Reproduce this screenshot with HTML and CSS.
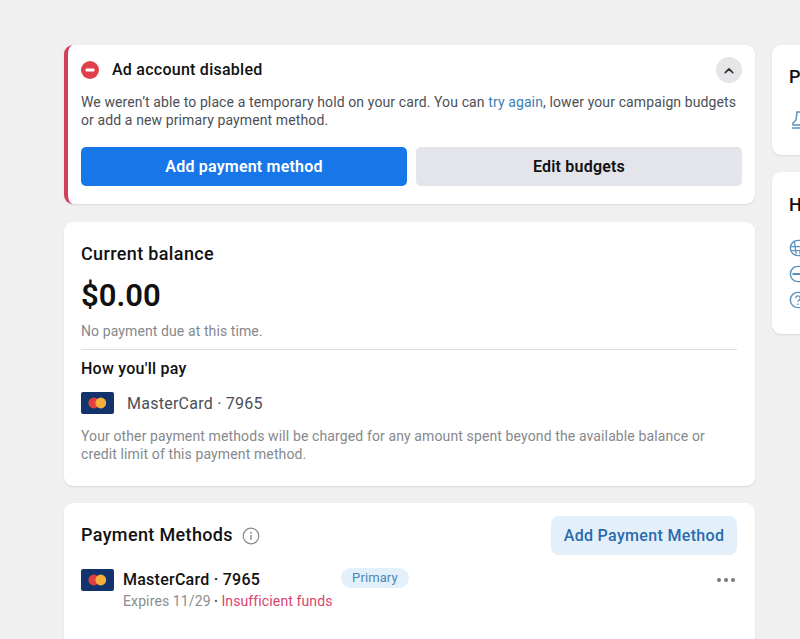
FILE: index.html
```html
<!DOCTYPE html>
<html lang="en">
<head>
<meta charset="utf-8">
<title>Billing</title>
<link rel="stylesheet" href="styles.css">
</head>
<body>
<div class="page">
  <main class="main">
    <section class="card alert">
      <div class="alert-head">
        <svg class="stop" viewBox="0 0 18 18" width="18" height="18"><circle cx="9" cy="9" r="9" fill="#e0404c"/><rect x="4.5" y="7.6" width="9" height="2.8" rx="1.2" fill="#fff"/></svg>
        <h2 class="alert-title">Ad account disabled</h2>
        <button class="collapse" aria-label="Collapse"><svg viewBox="0 0 12 8" width="10" height="7"><path d="M1.5 6.5 6 2l4.5 4.5" fill="none" stroke="#333" stroke-width="2" stroke-linecap="round" stroke-linejoin="round"/></svg></button>
      </div>
      <p class="alert-text">We weren’t able to place a temporary hold on your card. You can <a class="link">try again</a>, lower your campaign budgets or add a new primary payment method.</p>
      <div class="alert-actions">
        <button class="btn btn-primary">Add payment method</button>
        <button class="btn btn-grey">Edit budgets</button>
      </div>
    </section>

    <section class="card balance">
      <h2 class="balance-title">Current balance</h2>
      <div class="amount">$0.00</div>
      <p class="due">No payment due at this time.</p>
      <hr class="rule">
      <h3 class="pay-title">How you'll pay</h3>
      <div class="pay-row">
        <svg class="mc" viewBox="0 0 33 22" width="33" height="22"><rect width="33" height="22" rx="2" fill="#12336b"/><circle cx="12.8" cy="11" r="5.4" fill="#e2403f"/><circle cx="19.8" cy="11" r="5.4" fill="#f3b03c"/></svg>
        <span class="pay-name">MasterCard · 7965</span>
      </div>
      <p class="note">Your other payment methods will be charged for any amount spent beyond the available balance or credit limit of this payment method.</p>
    </section>

    <section class="card methods">
      <div class="methods-head">
        <h2 class="methods-title">Payment Methods</h2>
        <svg class="info" viewBox="0 0 18 18" width="18" height="18"><circle cx="9" cy="9" r="7.8" fill="none" stroke="#8a8a8a" stroke-width="1.2"/><rect x="8.3" y="8" width="1.4" height="5" fill="#8a8a8a"/><circle cx="9" cy="5.7" r="0.9" fill="#8a8a8a"/></svg>
        <button class="btn-add">Add Payment Method</button>
      </div>
      <div class="method-row">
        <svg class="mc" viewBox="0 0 33 22" width="33" height="22"><rect width="33" height="22" rx="2" fill="#12336b"/><circle cx="12.8" cy="11" r="5.4" fill="#e2403f"/><circle cx="19.8" cy="11" r="5.4" fill="#f3b03c"/></svg>
        <div class="method-info">
          <div class="method-line">
            <span class="method-name">MasterCard · 7965</span>
            <span class="badge">Primary</span>
          </div>
          <div class="method-sub">Expires 11/29 <span class="sep">•</span> <span class="danger">Insufficient funds</span></div>
        </div>
        <span class="dots"><i></i><i></i><i></i></span>
      </div>
    </section>
  </main>

  <aside class="side">
    <section class="card side-one">
      <h2 class="side-title">Payment activity</h2>
      <svg class="side-icon" viewBox="0 0 20 20" width="20" height="20"><path d="M8 2h4l1 8 3 3v2H4v-2l3-3z M3 18h14" fill="none" stroke="#5a93bd" stroke-width="1.5"/></svg>
    </section>
    <section class="card side-two">
      <h2 class="side-title">Help</h2>
      <div class="side-icons">
        <svg viewBox="0 0 20 20" width="18" height="18"><circle cx="10" cy="10" r="8.5" fill="none" stroke="#5a93bd" stroke-width="1.6"/><path d="M2 8.5h16M2.5 13h15M6 3l2 14M14 3l-2 14" fill="none" stroke="#5a93bd" stroke-width="1.4"/></svg>
        <svg viewBox="0 0 20 20" width="18" height="18"><circle cx="10" cy="10" r="8.5" fill="none" stroke="#5a93bd" stroke-width="1.6"/><path d="M4 10h12" stroke="#4a80aa" stroke-width="2"/></svg>
        <svg viewBox="0 0 20 20" width="18" height="18"><circle cx="10" cy="10" r="8.5" fill="none" stroke="#5a93bd" stroke-width="1.6"/><path d="M7.5 8a2.5 2.5 0 1 1 3.6 2.2c-.8.4-1.1 1-1.1 1.8M10 14v1.5" fill="none" stroke="#5a93bd" stroke-width="1.5"/></svg>
      </div>
    </section>
  </aside>
</div>
</body>
</html>
```
FILE: styles.css
```css
* { box-sizing: border-box; }
html, body { margin: 0; height: 639px; overflow: hidden; }
body { background: #f0f0f0; font-family: Roboto, "Liberation Sans", sans-serif; color: #111; }
h2, h3, p { margin: 0; }
button { font-family: inherit; border: 0; cursor: pointer; }

.page { display: flex; gap: 17px; align-items: flex-start; padding: 45px 0 0 64px; width: 1100px; }
.main { width: 691px; flex: none; display: flex; flex-direction: column; gap: 17px; }
.side { width: 260px; flex: none; display: flex; flex-direction: column; gap: 17px; }
.card { background: #fff; border-radius: 9px; box-shadow: 0 1px 2px rgba(0,0,0,.1); }

.alert { border-left: 4px solid #d1405a; padding: 13px 13px 18px 13px; height: 159px; margin-bottom: 1px; }
.alert-head { display: flex; align-items: center; height: 24px; }
.stop { margin-right: 13px; }
.alert-title { font-size: 16px; font-weight: 500; letter-spacing: .25px; color: #111; flex: 1; margin-bottom: 1px; }
.collapse { width: 26px; height: 26px; border-radius: 50%; background: #e6e6e8; display: flex; align-items: center; justify-content: center; padding: 0; }
.alert-text { font-size: 14px; letter-spacing: .11px; line-height: 18px; color: #4b4f56; margin-top: 11px; }
.link { color: #3a7fb5; }
.alert-actions { display: flex; gap: 9px; margin-top: 18px; }
.btn { flex: 1; height: 39px; border-radius: 5px; font-size: 16px; font-weight: 600; letter-spacing: .2px; }
.btn-primary { background: #1877e8; color: #fff; }
.btn-grey { background: #e4e5ea; color: #111; }

.balance { padding: 20px 18px 0 17px; height: 264px; }
.balance-title { font-size: 18px; font-weight: 500; letter-spacing: .36px; line-height: 24px; }
.amount { font-size: 31px; font-weight: 600; line-height: 38px; margin-top: 11px; }
.due { font-size: 14px; letter-spacing: .1px; line-height: 18px; color: #85888c; margin-top: 7px; }
.rule { border: 0; border-top: 1px solid #dadde1; margin: 9px 0 0; }
.pay-title { font-size: 16px; font-weight: 500; letter-spacing: .25px; line-height: 20px; margin-top: 9px; }
.pay-row { display: flex; align-items: center; gap: 13px; margin-top: 13px; }
.pay-name { font-size: 16px; letter-spacing: .25px; color: #4b4f56; }
.note { font-size: 14px; letter-spacing: .12px; line-height: 18px; color: #85888c; margin-top: 13px; }

.methods { padding: 13px 18px 0 17px; height: 200px; }
.methods-head { display: flex; align-items: center; height: 39px; }
.methods-title { font-size: 18px; font-weight: 500; letter-spacing: .36px; margin-bottom: 2px; }
.info { margin-left: 9px; }
.btn-add { margin-left: auto; width: 186px; height: 39px; border-radius: 8px; background: #e3f0fa; color: #2a6ab0; font-size: 16px; font-weight: 500; letter-spacing: .33px; }
.method-row { display: flex; align-items: flex-start; margin-top: 13px; position: relative; }
.method-row .mc { margin-top: 1px; }
.method-info { margin-left: 9px; flex: 1; }
.method-line { display: flex; align-items: center; height: 22px; }
.method-name { font-size: 16px; font-weight: 500; letter-spacing: .25px; }
.badge { margin-left: 81px; height: 20px; padding: 0 11px; border-radius: 10px; background: #e3f0fa; color: #4a86b8; font-size: 13px; letter-spacing: .1px; line-height: 20px; margin-top: -2px; }
.method-sub { font-size: 14px; letter-spacing: .12px; line-height: 18px; color: #8a8d91; margin-top: 2px; }
.sep { color: #555; font-size: 10px; vertical-align: 1px; }
.danger { color: #d8436f; }
.dots { display: flex; gap: 3px; margin: 10px 2px 0 0; }
.dots i { width: 4px; height: 4px; border-radius: 50%; background: #777; display: block; }

.side-one { height: 110px; padding: 20px 17px 0 17px; }
.side-two { height: 162px; padding: 21px 17px 0 17px; }
.side-title { font-size: 18px; font-weight: 500; line-height: 24px; }
.side-icon { display: block; margin-top: 21px; }
.side-icons { display: flex; flex-direction: column; gap: 8px; margin-top: 22px; }
.side-icons svg { display: block; }
```
